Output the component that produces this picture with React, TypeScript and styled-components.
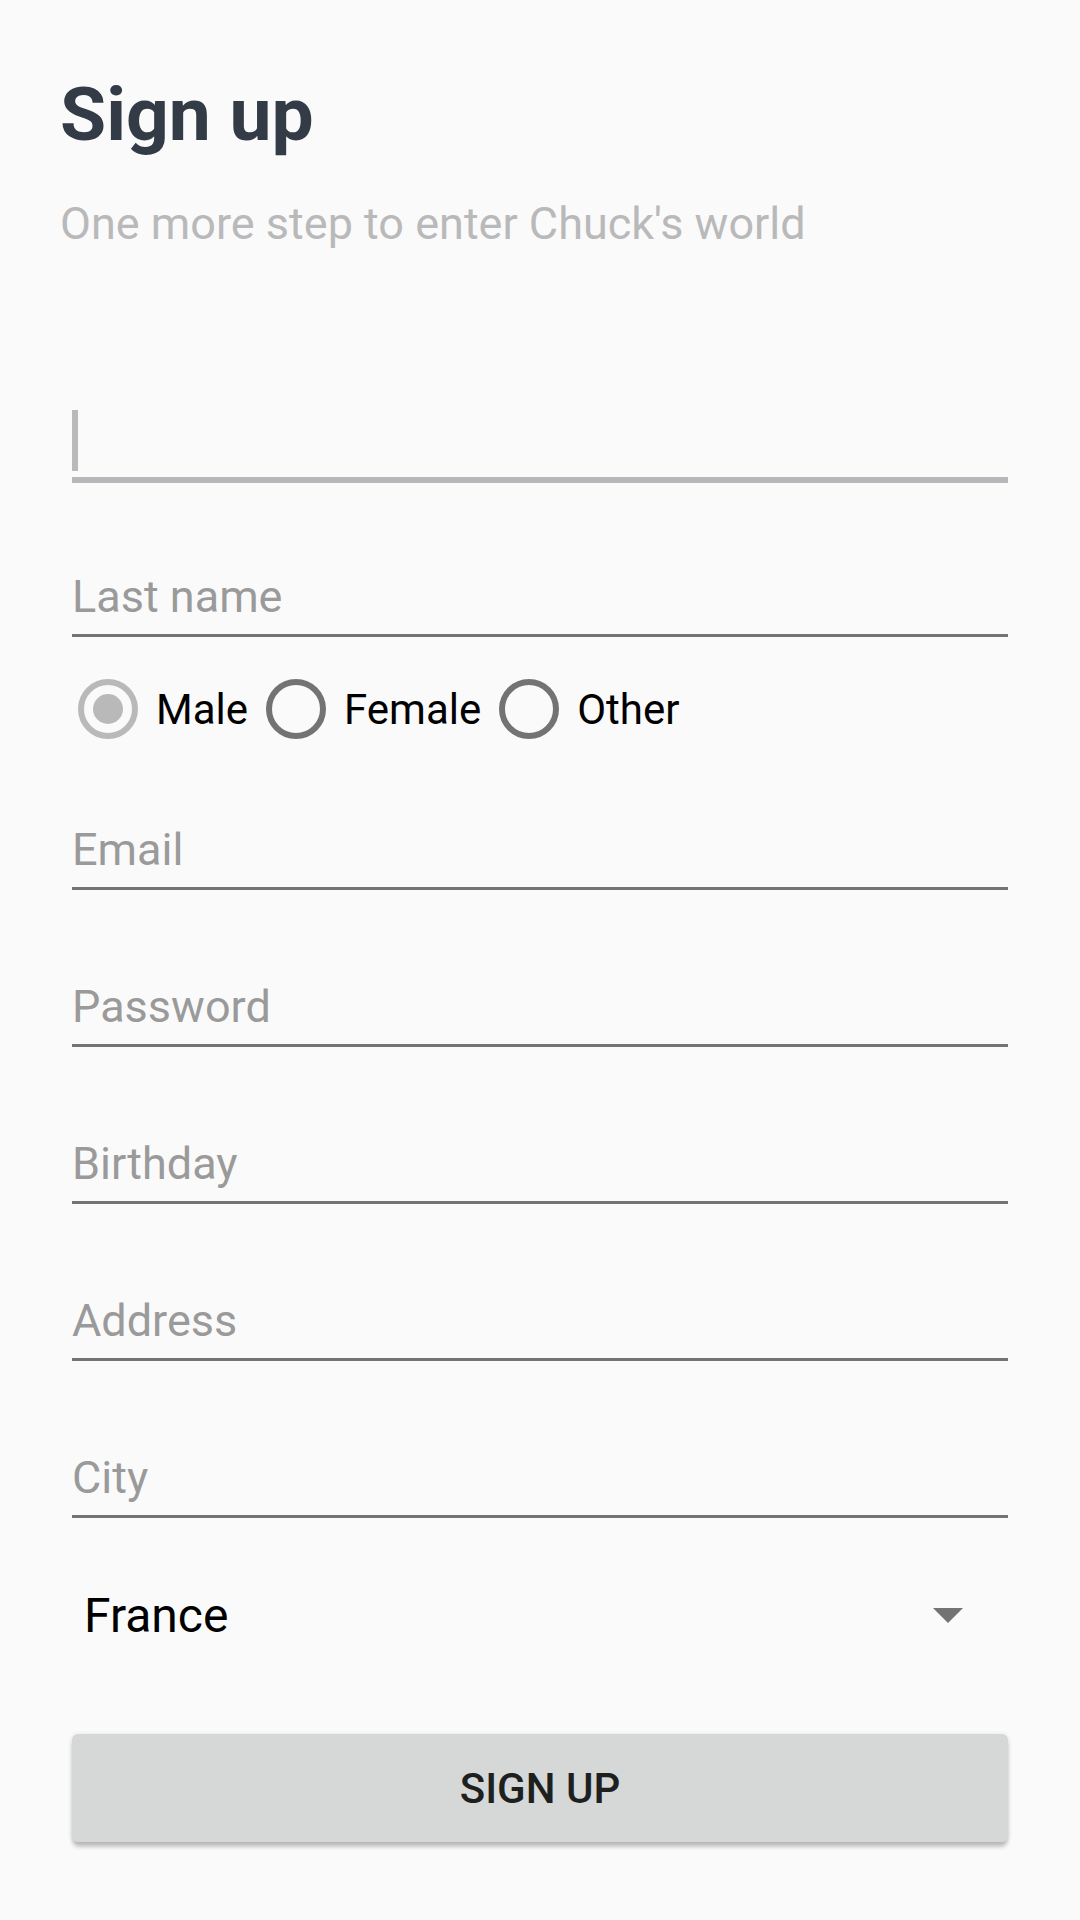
import React from "react";
import styled, { createGlobalStyle } from "styled-components";

const GlobalStyle = createGlobalStyle`
  *, *::before, *::after { box-sizing: border-box; }
  body {
    margin: 0;
    background: #fafafa;
    font-family: Roboto, "Liberation Sans", sans-serif;
  }
`;

const Page = styled.main`
  padding: 70px 60px;
`;

const Title = styled.h1`
  margin: 0;
  color: #323b46;
  font-size: 75px;
  line-height: 88px;
  font-weight: 700;
`;

const Subtitle = styled.p`
  margin: 38px 0 0;
  color: #b9b9ba;
  font-size: 45px;
  line-height: 56px;
  font-weight: 400;
`;

const Form = styled.form`
  display: flex;
  flex-direction: column;
  margin-top: 111px;
  padding: 0 12px;
`;

const Field = styled.input`
  width: 100%;
  height: 120px;
  margin: 0 0 37px;
  padding: 42px 0 0;
  border: 0;
  border-bottom: 3px solid #737373;
  border-radius: 0;
  outline: 0;
  background: transparent;
  color: #000;
  font-family: inherit;
  font-size: 45px;
  line-height: 56px;
  &::placeholder { color: #9a9a9a; opacity: 1; }
`;

const ActiveField = styled.label`
  display: flex;
  align-items: flex-end;
  height: 120px;
  margin-bottom: 34px;
  padding-bottom: 6px;
  border-bottom: 6px solid #b7b7bb;
`;

const Caret = styled.span`
  flex: none;
  width: 6px;
  height: 61px;
  background: #b9b9ba;
`;

const ActiveInput = styled(Field)`
  height: 61px;
  margin: 0;
  padding: 0;
  border: 0;
`;

const Genders = styled.fieldset`
  display: flex;
  gap: 18px;
  min-width: 0;
  margin: 0;
  padding: 5px 6px 31px;
  border: 0;
`;

const Option = styled.label`
  display: flex;
  align-items: center;
  gap: 18px;
  font-size: 42px;
  line-height: 50px;
  color: #000;
`;

const OptionText = styled.span`
  padding-top: 2px;
`;

const Radio = styled.input`
  appearance: none;
  display: grid;
  place-items: center;
  flex: none;
  width: 60px;
  height: 60px;
  margin: 0;
  border: 6px solid #737373;
  border-radius: 50%;
  &:checked { border-color: #b9b9ba; }
  &:checked::before {
    content: "";
    width: 30px;
    height: 30px;
    border-radius: 50%;
    background: #b9b9ba;
  }
`;

const Country = styled.div`
  display: flex;
  align-items: center;
  height: 121px;
`;

const Select = styled.select`
  appearance: none;
  flex: 1;
  height: 72px;
  padding: 0 12px;
  border: 0;
  outline: 0;
  background: transparent;
  color: #000;
  font-family: inherit;
  font-size: 48px;
`;

const Arrow = styled.svg`
  flex: none;
  width: 30px;
  height: 15px;
  margin-right: 45px;
  pointer-events: none;
`;

const Submit = styled.button`
  height: 108px;
  margin-top: 58px;
  border: 0;
  border-radius: 6px;
  background: #d6d7d7;
  box-shadow: 0 6px 4px -1px rgba(0, 0, 0, 0.2), 0 1px 5px rgba(0, 0, 0, 0.14);
  color: #1e1f1f;
  font-family: inherit;
  font-size: 42px;
  font-weight: 500;
`;

export default function App() {
  return (
    <Page>
      <GlobalStyle />
      <Title>Sign up</Title>
      <Subtitle>One more step to enter Chuck's world</Subtitle>
      <Form onSubmit={(e) => e.preventDefault()}>
        <ActiveField>
          <Caret />
          <ActiveInput aria-label="First name" />
        </ActiveField>
        <Field aria-label="Last name" placeholder="Last name" />
        <Genders aria-label="Gender">
          {["Male", "Female", "Other"].map((g) => (
            <Option key={g}>
              <Radio type="radio" name="gender" defaultChecked={g === "Male"} />
              <OptionText>{g}</OptionText>
            </Option>
          ))}
        </Genders>
        {["Email", "Password", "Birthday", "Address", "City"].map((f) => (
          <Field key={f} aria-label={f} placeholder={f} type={f === "Password" ? "password" : "text"} />
        ))}
        <Country>
          <Select aria-label="Country" defaultValue="France">
            <option>France</option>
          </Select>
          <Arrow viewBox="0 0 30 15" aria-hidden="true">
            <path d="M0 0h30L15 15z" fill="#737373" />
          </Arrow>
        </Country>
        <Submit type="submit">SIGN UP</Submit>
      </Form>
    </Page>
  );
}
